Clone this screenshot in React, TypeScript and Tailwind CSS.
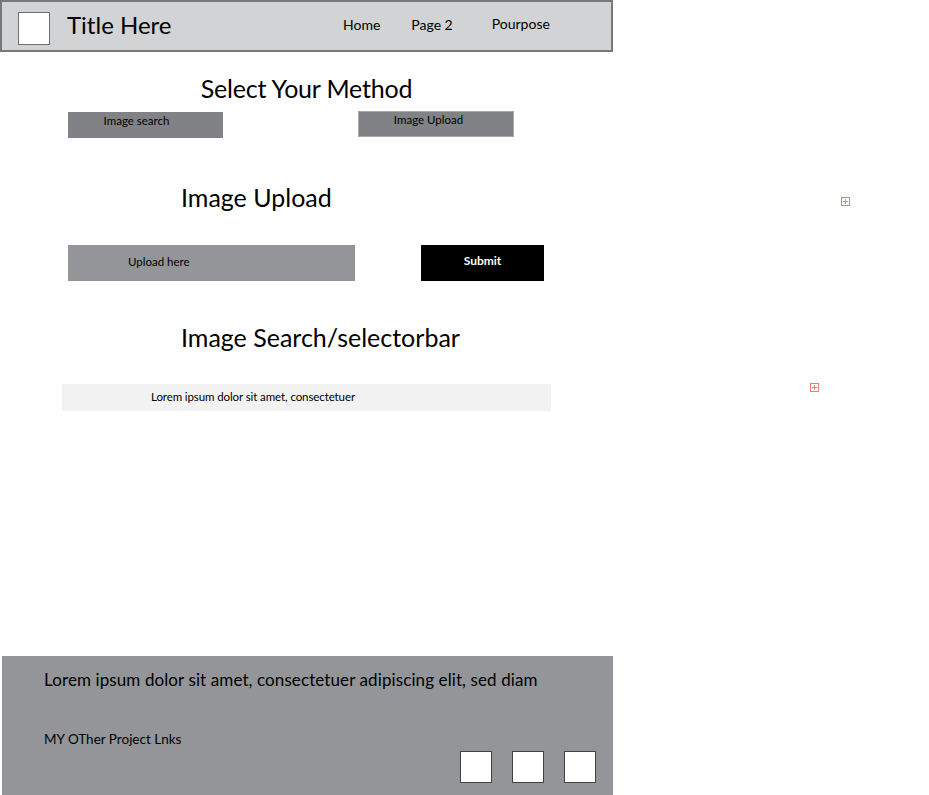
import React from "react";

const navLinks = [
  { label: "Home", className: "ml-[341px]" },
  { label: "Page 2", className: "ml-[31px]" },
  { label: "Pourpose", className: "ml-[39px] -translate-y-[1px]" },
];

function Marker({ className }: { className: string }) {
  return (
    <div
      className={`absolute flex h-[9px] w-[9px] items-center justify-center border border-[#ec7a7a] ${className}`}
    >
      <div className="absolute h-[1px] w-[5px] bg-[#ec7a7a]" />
      <div className="absolute h-[5px] w-[1px] bg-[#ec7a7a]" />
    </div>
  );
}

export default function App() {
  return (
    <div
      className="relative h-[795px] w-[929px] overflow-hidden bg-white text-black"
      style={{ fontFamily: "Lato, 'Noto Sans', sans-serif" }}
    >
      <div className="flex w-[613px] flex-col">
        <header className="relative flex h-[52px] items-center border-2 border-[#77787b] bg-[#d1d3d4]">
          <div className="absolute left-[16px] top-[10px] h-[33px] w-[32px] border border-[#6d6e71] bg-white" />
          <h1 className="ml-[65px] -mt-[3px] text-[24px] leading-none">Title Here</h1>
          <nav className="absolute left-0 top-[16px] flex text-[14px] leading-none">
            {navLinks.map((link) => (
              <a key={link.label} className={link.className}>
                {link.label}
              </a>
            ))}
          </nav>
        </header>

        <h2 className="mt-[23px] text-center text-[25px] leading-[26px] tracking-[-0.2px]">
          Select Your Method
        </h2>

        <div className="mt-[11px] flex items-start pl-[68px]">
          <button className="h-[26px] w-[155px] bg-[#808285] pb-[8px] pr-[18px] text-[11.5px] leading-[14px]">
            Image search
          </button>
          <button className="ml-[135px] -mt-[1px] h-[26px] w-[156px] border border-[#a7a9ac] bg-[#808285] pb-[8px] pr-[15px] text-[11.5px] leading-[14px]">
            Image Upload
          </button>
        </div>

        <h2 className="mt-[46px] pl-[181px] text-[25px] leading-[26px]">Image Upload</h2>

        <div className="mt-[35px] flex pl-[68px]">
          <div className="flex h-[36px] w-[287px] items-center bg-[#939598] pb-[2px] pl-[60px] text-[11.5px] leading-none">
            Upload here
          </div>
          <button className="ml-[66px] flex h-[36px] w-[123px] items-center justify-center bg-black pb-[4px] text-[12px] font-bold leading-none text-white">
            Submit
          </button>
        </div>

        <h2 className="mt-[43px] pl-[181px] text-[25px] leading-[26px]">Image Search/selectorbar</h2>

        <div className="ml-[62px] mt-[34px] flex h-[27px] w-[489px] items-center bg-[#f2f2f2] pb-[1px] pl-[89px] text-[11.5px] leading-none tracking-[-0.1px]">
          Lorem ipsum dolor sit amet, consectetuer
        </div>

        <footer className="relative ml-[2px] mt-[245px] h-[139px] w-[611px] bg-[#939598] px-[42px] pt-[14px]">
          <p className="text-[17px] leading-[20px] tracking-[0.1px]">
            Lorem ipsum dolor sit amet, consectetuer adipiscing elit, sed diam
          </p>
          <p className="mt-[41px] text-[13.5px] leading-[16px]">MY OTher Project Lnks</p>
          <div className="absolute right-[17px] top-[95px] flex gap-[20px]">
            <div className="h-[32px] w-[32px] border border-[#414042] bg-white" />
            <div className="h-[32px] w-[32px] border border-[#414042] bg-white" />
            <div className="h-[32px] w-[32px] border border-[#414042] bg-white" />
          </div>
        </footer>
      </div>

      <Marker className="left-[841px] top-[197px]" />
      <Marker className="left-[810px] top-[383px]" />
    </div>
  );
}
